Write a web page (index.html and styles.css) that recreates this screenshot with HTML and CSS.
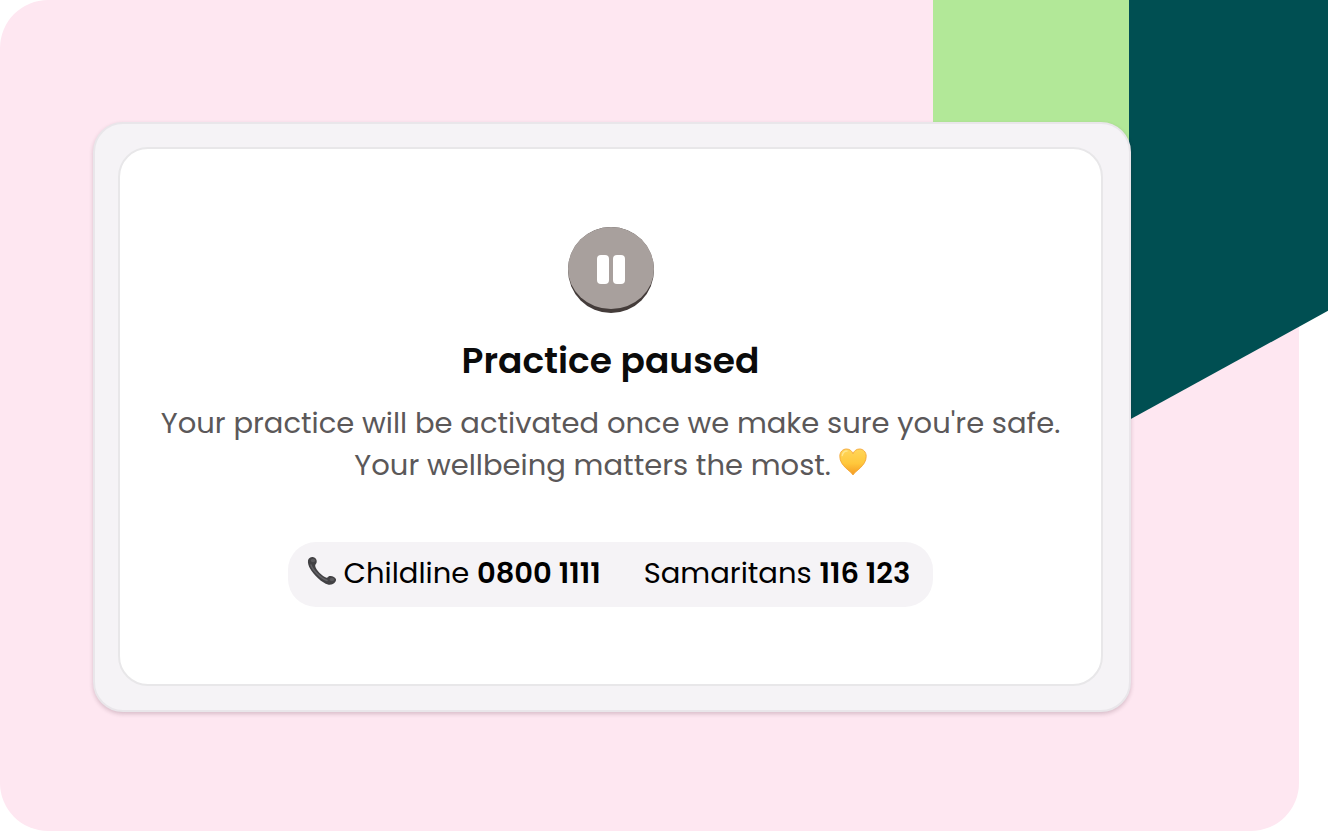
FILE: index.html
```html
<!DOCTYPE html>
<html lang="en">
<head>
    <meta charset="UTF-8">
    <meta name="viewport" content="width=device-width, initial-scale=1.0">
    <title>Practice paused</title>
    <link rel="stylesheet" href="styles.css">
</head>
<body>
    <div class="page">
        <div class="ribbon" aria-hidden="true">
            <div class="ribbon-light"></div>
            <div class="ribbon-dark"></div>
        </div>

        <main class="panel">
            <div class="frame">
                <section class="card">
                    <svg class="pause-icon" viewBox="0 0 88 88" aria-hidden="true">
                        <circle cx="44" cy="44" r="43" fill="#443c3a"/>
                        <path d="M1 43a43 42 0 0 1 86 0a43 40 0 0 1-86 0z" fill="#a8a09d"/>
                        <rect x="30" y="29" width="12" height="29" rx="4" fill="#fff"/>
                        <rect x="46" y="29" width="12" height="29" rx="4" fill="#fff"/>
                    </svg>

                    <h1 class="title">Practice paused</h1>

                    <p class="message">
                        Your practice will be activated once we make sure you're safe.<br>
                        Your wellbeing matters the most.
                        <svg class="heart-icon" viewBox="0 0 28 28" role="img" aria-label="Yellow heart">
                            <defs>
                                <linearGradient id="heartFill" x1="0" y1="0" x2="0" y2="1">
                                    <stop offset="0" stop-color="#ffd65a"/>
                                    <stop offset="0.55" stop-color="#ffc83c"/>
                                    <stop offset="1" stop-color="#f59a22"/>
                                </linearGradient>
                            </defs>
                            <path d="M14 27C12 23 .8 18 .8 8.400C.8 4 3.700 1 7.500 1C10.500 1 13 2.800 14 5.800C15 2.800 17.500 1 20.500 1C24.300 1 27.200 4 27.200 8.400C27.200 18 16 23 14 27Z" fill="url(#heartFill)" stroke="#f3a638" stroke-width="0.9"/>
                            <path d="M3.300 7.500C3.800 4.500 5.500 3 8 3" fill="none" stroke="#ffe58c" stroke-width="1.500" stroke-linecap="round"/>
                        </svg>
                    </p>

                    <div class="helplines">
                        <a class="helpline" href="tel:08001111">
                            <svg class="phone-icon" viewBox="0 0 30 30" aria-hidden="true">
                                <path d="M1 4.500C1.400 2 4 .7 6.500 1.200C8.800 1.700 10.300 4.200 9.600 6.500C9.200 8 8 8.400 8.200 9.900C9 14 15.500 20.300 19.500 21.700C20.800 22 21 20.600 22.300 20.100C24.500 19.300 28.300 20.800 29 23.200C29.400 25.300 27 28 24.300 28.600C20.500 29.300 15.500 26.500 10.500 21.700C4.500 16 .3 9.500 1 4.500Z" fill="#424144"/>
                                <path d="M4 9C5.500 14 14 22.500 20 24.500" fill="none" stroke="#626165" stroke-width="1.500" stroke-linecap="round"/>
                                <ellipse cx="6" cy="4.500" rx="2.200" ry="1.800" fill="#5b5a5d"/>
                                <ellipse cx="25" cy="23.500" rx="2.200" ry="1.800" fill="#5b5a5d"/>
                            </svg>
                            <span>Childline <strong>0800 1111</strong></span>
                        </a>
                        <a class="helpline" href="tel:116123">
                            <span>Samaritans <strong>116 123</strong></span>
                        </a>
                    </div>
                </section>
            </div>
        </main>
    </div>
</body>
</html>
```

FILE: styles.css
```css
* {
    box-sizing: border-box;
}

body {
    margin: 0;
    background-color: #fff;
    color: #000;
    font-family: Poppins, Inter, sans-serif;
}

.page {
    position: relative;
    display: flex;
    min-height: 100vh;
    padding: 0 29px 3px 0;
}

.panel {
    display: flex;
    flex: 1;
    padding: 122px 168px 119px 93px;
    border-radius: 48px;
    background-color: #fee7f1;
}

/* Decorative ribbon behind the card */
.ribbon {
    position: absolute;
    top: 0;
    right: 0;
    display: flex;
    height: 420px;
}

.ribbon-light {
    width: 196px;
    height: 200px;
    background-color: #b2e898;
}

.ribbon-dark {
    width: 199px;
    background-color: #004f52;
    clip-path: polygon(0 0, 100% 0, 100% 74%, 0 100%);
}

.frame {
    position: relative;
    display: flex;
    flex: 1;
    padding: 23px 26px 24px 23px;
    border: 2px solid #e9e6ea;
    border-radius: 30px;
    background-color: #f5f3f6;
    box-shadow: 0 2px 4px rgba(60, 20, 40, 0.2);
}

.card {
    display: flex;
    flex: 1;
    flex-direction: column;
    align-items: center;
    justify-content: center;
    border: 2px solid #e8e7e9;
    border-radius: 30px;
    background-color: #fff;
    text-align: center;
}

.pause-icon {
    width: 88px;
    height: 88px;
}

.title {
    margin: 26px 0 20px;
    font-size: 36px;
    font-weight: 600;
    line-height: 42px;
    color: #0b0b0b;
}

.message {
    margin: 0 0 56px;
    font-size: 29px;
    line-height: 42px;
    color: #5b5859;
}

.heart-icon {
    width: 28px;
    height: 28px;
    vertical-align: -1px;
}

.helplines {
    display: flex;
    flex-wrap: wrap;
    justify-content: center;
    gap: 0 43px;
    padding: 10px 23px 13px 19px;
    border-radius: 28px;
    background-color: #f5f3f6;
}

.helpline {
    display: flex;
    gap: 7px;
    font-size: 29px;
    line-height: 42px;
    color: #000;
    text-decoration: none;
}

.helpline strong {
    font-weight: 600;
}

.phone-icon {
    width: 30px;
    height: 30px;
    margin-top: 4px;
}
```
